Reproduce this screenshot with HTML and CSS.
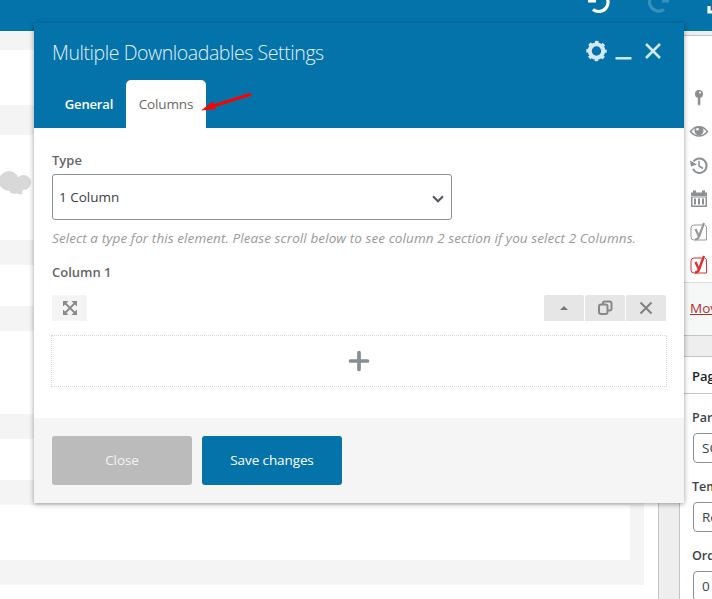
FILE: index.html
```html
<!DOCTYPE html>
<html lang="en">
<head>
<meta charset="utf-8">
<title>Multiple Downloadables Settings</title>
<link rel="stylesheet" href="styles.css">
</head>
<body>
<div class="topbar">
  <svg width="124" height="31" viewBox="0 0 124 31" fill="none" stroke-width="3.2">
    <path d="M3 -3A9.300 9.300 0 1 1 5 9.500M0 .8h8" class="undo"/>
    <path d="M78 -4A9.300 9.300 0 1 0 76 9.500M74 .8h7" class="redo"/>
    <path d="M121 6v6h6" stroke="#fff"/>
  </svg>
</div>
<div class="page">
  <main class="editor">
    <div class="row r1"></div>
    <div class="row r2">
      <svg width="34" height="28" viewBox="0 0 34 28" fill="#d8d8d8"><circle cx="9" cy="11" r="10"/><circle cx="23.500" cy="12.500" r="7.500"/><path d="M10 15H25L22.500 20.500 22 25C18 22.500 14 25 10 22.500Z"/></svg>
    </div>
    <div class="row r3"></div>
    <div class="row r4"></div>
    <div class="row r5"></div>
    <div class="row r6"></div>
  </main>
  <aside class="sidebar">
    <section class="publish">
      <div class="icons">
        <svg viewBox="0 0 20 20"><circle cx="10" cy="6" r="4"/><path d="M8.800 9h2.600v7l-1.300 2-1.300-2z"/><circle cx="11" cy="4.500" r="1" fill="#fff"/></svg>
        <svg viewBox="0 0 20 20"><path d="M1.500 10.500C6 4 14 4 18.500 10.500 14 16.500 6 16.500 1.500 10.500Z" fill="none" stroke="#8c8f94" stroke-width="1.500"/><circle cx="10" cy="9.800" r="4.500"/><circle cx="8.500" cy="8.300" r="1.300" fill="#fff"/></svg>
        <svg viewBox="0 0 20 20"><path d="M4.500 6.500A7.200 7.200 0 1 1 4 14" fill="none" stroke="#8c8f94" stroke-width="2"/><path d="M1 5.500l1 6 6-2z"/><path d="M10 6v5l4 2.500" fill="none" stroke="#8c8f94" stroke-width="1.500"/></svg>
        <svg viewBox="0 0 20 20"><path d="M2 4.500h2V2.500h3v2h6v-2h3v2h2v3.500H2z"/><path d="M2 8.500h16V19H2zM3.500 9.500v8h13v-8z" fill-rule="evenodd"/><path d="M5 10.500h2v6H5zM9 10.500h2v6H9zM13 10.500h2v6h-2z"/></svg>
        <svg viewBox="0 0 20 20" class="yoast"><path d="M13 3H5Q2 3 2 6v9q0 3 3 3h12.500V6Q17.500 4 16 3" stroke-width="1"/><path d="M6.500 7l3.500 7.500M15 1L10 14.500Q9 17.500 6 17.500" stroke-width="2.200"/></svg>
        <svg viewBox="0 0 20 20" class="yoast red"><path d="M13 3H5Q2 3 2 6v9q0 3 3 3h12.500V6Q17.500 4 16 3" stroke-width="1"/><path d="M6.500 7l3.500 7.500M15 1L10 14.500Q9 17.500 6 17.500" stroke-width="2.400"/></svg>
      </div>
      <div class="trash"><a>Move to Trash</a></div>
    </section>
    <section class="attributes">
      <h2>Page Attributes</h2>
      <div class="fields">
        <label>Parent Page</label><div class="input">SOP</div>
        <label>Template</label><div class="input">Read</div>
        <label>Order</label><div class="input">0</div>
      </div>
    </section>
  </aside>
</div>
<div class="modal">
  <header>
    <div class="heading">
      <h1>Multiple Downloadables Settings</h1>
      <svg width="80" height="22" viewBox="0 0 80 22" stroke="#d5e8f1" fill="none">
        <circle cx="10.500" cy="11" r="6.700" stroke-width="4"/>
        <circle cx="10.500" cy="11" r="9" stroke-width="2.400" stroke-dasharray="3.500 3.569" stroke-dashoffset="1.750"/>
        <path d="M29.500 18.300h16" stroke-width="2.500"/><path d="M60 4l14 14M74 4l-14 14" stroke-width="2.500"/>
      </svg>
    </div>
    <nav><span class="tab general">General</span><span class="tab active">Columns</span></nav>
    <svg class="arrow" width="54" height="24" viewBox="0 0 54 24"><path d="M50 4.500L13 16" stroke="#fe0000" stroke-width="3" stroke-linecap="round"/><path d="M1 20.500L13 11.500 16 19Z" fill="#fe0000"/></svg>
  </header>
  <div class="body">
    <div class="label">Type</div>
    <div class="select"><span>1 Column</span><svg width="12" height="8" viewBox="0 0 12 8"><path d="M1 1.300l5 5 5-5" fill="none" stroke="#50575e" stroke-width="2"/></svg></div>
    <p>Select a type for this element. Please scroll below to see column 2 section if you select 2 Columns.</p>
    <div class="label second">Column 1</div>
    <div class="tools">
      <div class="tool expand"><svg width="14" height="14" viewBox="0 0 14 14"><path d="M2 2l10 10M12 2L2 12" stroke="#8a8a8a" stroke-width="1.800"/><path d="M0 0h5.500L0 5.500zM14 0v5.500L8.500 0zM0 14V8.500L5.500 14zM14 14H8.500L14 8.500z" fill="#8a8a8a"/></svg></div>
      <div class="group">
        <div class="tool"><svg width="8" height="4" viewBox="0 0 8 4"><path d="M0 4l4-4 4 4z" fill="#777"/></svg></div>
        <div class="tool"><svg width="16" height="16" viewBox="0 0 16 16" fill="none" stroke="#888" stroke-width="2"><rect x="2" y="4.500" width="8.500" height="9.500" rx="2"/><path d="M6 4V3a1.500 1.500 0 0 1 1.500-1.500h5A2 2 0 0 1 14.500 3.500v5a2 2 0 0 1-2 2H11"/></svg></div>
        <div class="tool"><svg width="14" height="14" viewBox="0 0 14 14"><path d="M1.500 1.500l11 11M12.500 1.500l-11 11" stroke="#808080" stroke-width="2"/></svg></div>
      </div>
    </div>
    <div class="drop"><svg width="22" height="22" viewBox="0 0 22 22"><path d="M11 2.500v17M2.500 11h17" stroke="#868e96" stroke-width="3.700" stroke-linecap="round"/></svg></div>
  </div>
  <footer><button class="close">Close</button><button class="save">Save changes</button></footer>
</div>
</body>
</html>
```
FILE: styles.css
```css
* { box-sizing: border-box; }
body { margin: 0; width: 712px; height: 599px; overflow: hidden; position: relative; background: #fff; color: #3c434a; font: 13.5px "Open Sans", "Noto Sans", sans-serif; }
svg { display: block; flex: none; }
.topbar { height: 31px; background: #0473aa; display: flex; justify-content: flex-end; overflow: hidden; }
.undo { stroke: #fff; }
.redo { stroke: #3990bc; }
.page { display: flex; height: 568px; background: #eee; }
.editor { width: 659px; flex: none; padding-top: 19px; padding-right: 28px; border-right: 1px solid #c3c4c7; background: linear-gradient(to right, #f4f4f4 644px, #fff 644px) no-repeat 0 0 / 100% 554px, #fff; }
.row { background: #fff; width: 630px; }
.r1 { height: 55px; }
.r2 { height: 105px; margin-top: 30px; padding-top: 35px; }
.r3 { height: 41px; margin-top: 25px; }
.r4 { height: 83px; margin-top: 25px; }
.r5 { height: 41px; margin-top: 25px; }
.r6 { height: 55px; margin-top: 25px; }
.sidebar { width: 33px; margin-left: 20px; flex: none; padding-top: 4px; overflow: hidden; }
.publish { height: 301px; width: 280px; border: 1px solid #c3c4c7; background: #fff; }
.icons { height: 246px; padding: 52px 0 0 9px; display: flex; flex-direction: column; gap: 13.4px; }
.icons svg { width: 20px; height: 20px; fill: #8c8f94; }
.icons .yoast { fill: none; stroke: #999; }
.icons .red { stroke: #dc3232; }
.trash { height: 53px; border-top: 1px solid #dcdcde; background: #f6f7f7; padding: 15px 10px; line-height: 20px; color: #b32d2e; }
.trash a { text-decoration: underline; white-space: nowrap; }
.attributes { margin-top: 20px; width: 280px; height: 260px; border: 1px solid #c3c4c7; background: #fff; }
h2 { margin: 0; height: 37px; border-bottom: 1px solid #c3c4c7; padding-left: 12px; font-size: 13px; line-height: 38px; font-weight: 600; color: #1d2327; }
.fields { padding: 13px; }
.fields label { display: block; height: 26px; margin-left: -1px; line-height: 22px; font-size: 12.5px; font-weight: 600; }
.input { height: 30px; margin-bottom: 13px; padding-left: 8px; border: 1px solid #8c8f94; border-radius: 4px; line-height: 28px; font-size: 13.5px; }
.modal { position: absolute; left: 34px; top: 23px; width: 650px; height: 480px; background: #fff; box-shadow: 0 1px 5px rgba(0, 0, 0, .4); }
header { height: 105px; background: #0473aa; display: flex; flex-direction: column; justify-content: space-between; position: relative; }
.heading { display: flex; justify-content: space-between; align-items: flex-start; padding: 17px 18px 0 18px; }
h1 { margin: 0; padding-top: 1px; font-size: 19.5px; line-height: 23px; font-weight: 300; color: #e3f0f6; white-space: nowrap; letter-spacing: -.42px; }
nav { display: flex; padding-left: 18px; }
.tab { height: 48px; line-height: 48px; display: flex; justify-content: center; border-radius: 5px 5px 0 0; }
.general { width: 74px; color: #fff; font-weight: 600; font-size: 13px; letter-spacing: -.15px; }
.active { width: 80px; background: #fff; color: #686868; letter-spacing: -.15px; }
.arrow { position: absolute; left: 166px; top: 67px; }
.body { height: 290px; padding: 22px 17px 0 18px; }
.label { height: 24px; line-height: 20px; font-weight: 600; font-size: 13px; color: #666; }
.select { width: 400px; height: 46px; border: 1px solid #8c8f94; border-radius: 3px; padding: 0 7px 0 6px; display: flex; justify-content: space-between; align-items: center; color: #3c4146; }
.select svg { margin-top: 4px; }
p { margin: 8px 0 0; line-height: 20px; height: 20px; font-style: italic; color: #999; white-space: nowrap; letter-spacing: .09px; }
.second { margin-top: 14px; height: 33px; }
.tools { display: flex; justify-content: space-between; padding-right: 1px; }
.group { display: flex; gap: 1px; }
.tool { width: 40px; height: 26px; background: #e6e6e6; display: flex; justify-content: center; align-items: center; border-radius: 2px 2px 0 0; }
.expand { width: 35px; background: #f4f4f4; }
.drop { margin: 14px 0 0 -1px; width: 616px; height: 52px; border: 1px dotted #d8d8d8; display: flex; justify-content: center; align-items: center; }
footer { height: 85px; background: #f5f5f5; padding: 18px; display: flex; gap: 10px; }
button { width: 140px; height: 49px; border: 0; border-radius: 3px; padding: 0 0 2px; color: #fff; font: 13.5px "Open Sans", "Noto Sans", sans-serif; letter-spacing: -.1px; }
.close { background: #bbb; color: #f4f4f4; }
.save { background: #0473aa; }
```
